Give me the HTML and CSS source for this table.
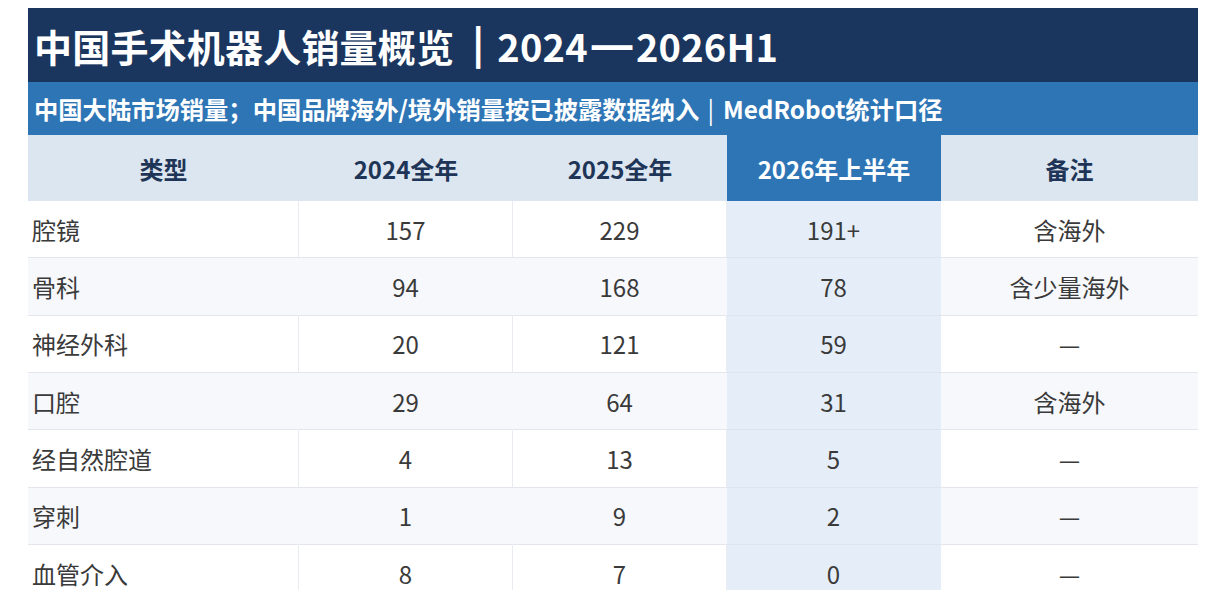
FILE: index.html
```html
<!DOCTYPE html>
<html lang="zh-CN">
<head>
<meta charset="utf-8">
<title>中国手术机器人销量概览</title>
<link rel="stylesheet" href="styles.css">
</head>
<body>
<div class="sheet">
  <div class="title">中国手术机器人销量概览<span class="bar">|</span>2024<span class="dash">—</span>2026H1</div>
  <div class="subtitle">中国大陆市场销量；中国品牌海外/境外销量按已披露数据纳入<span class="pipe">|</span>MedRobot统计口径</div>
  <div class="grid">
    <div class="th">类型</div>
    <div class="th">2024全年</div>
    <div class="th">2025全年</div>
    <div class="th hl">2026年上半年</div>
    <div class="th last">备注</div>

    <div class="td name">腔镜</div><div class="td">157</div><div class="td">229</div><div class="td hlc">191+</div><div class="td last">含海外</div>
    <div class="td name alt">骨科</div><div class="td alt">94</div><div class="td alt">168</div><div class="td hlc">78</div><div class="td alt last">含少量海外</div>
    <div class="td name">神经外科</div><div class="td">20</div><div class="td">121</div><div class="td hlc">59</div><div class="td last">—</div>
    <div class="td name alt">口腔</div><div class="td alt">29</div><div class="td alt">64</div><div class="td hlc">31</div><div class="td alt last">含海外</div>
    <div class="td name">经自然腔道</div><div class="td">4</div><div class="td">13</div><div class="td hlc">5</div><div class="td last">—</div>
    <div class="td name alt">穿刺</div><div class="td alt">1</div><div class="td alt">9</div><div class="td hlc">2</div><div class="td alt last">—</div>
    <div class="td name">血管介入</div><div class="td">8</div><div class="td">7</div><div class="td hlc">0</div><div class="td last">—</div>
  </div>
</div>
</body>
</html>
```

FILE: styles.css
```css
* { box-sizing: border-box; }
html, body { margin: 0; padding: 0; background: #ffffff; }
body {
  font-family: "Noto Sans CJK SC", "Noto Sans", sans-serif;
  overflow: hidden;
}
.sheet {
  margin: 8px 0 0 28px;
  width: 1170px;
}
.title {
  height: 74px;
  background: #1b365e;
  color: #ffffff;
  font-size: 38px;
  font-weight: 700;
  display: flex;
  align-items: center;
  padding-left: 6px;
  letter-spacing: 0.2px;
}
.title .bar {
  display: inline-block;
  font-family: "DejaVu Sans", sans-serif;
  font-weight: 700;
  margin: 0 12px 0 17px;
  transform: scaleY(1.1);
}
.title .dash {
  display: inline-block;
  font-family: "DejaVu Sans", sans-serif;
  font-weight: 700;
  margin: 0 5px;
  transform: scaleX(1.2);
}
.subtitle {
  height: 53px;
  background: #2e75b6;
  color: #ffffff;
  font-size: 24.3px;
  font-weight: 700;
  display: flex;
  align-items: center;
  padding-left: 6px;
}
.subtitle .pipe { margin: 0 9px 0 8px; font-weight: 400; }
.grid {
  display: grid;
  grid-template-columns: 271px 214px 214px 214px 257px;
  grid-template-rows: 66px repeat(7, 57.33px);
}
.th {
  background: #dce6f0;
  color: #1e3557;
  font-size: 24px;
  font-weight: 700;
  display: flex;
  align-items: center;
  justify-content: center;
}
.th.hl { background: #2e75b6; color: #ffffff; }
.td {
  background: #ffffff;
  color: #3a3a3a;
  font-size: 24px;
  display: flex;
  align-items: center;
  justify-content: center;
  border-right: 1px solid #e8ecf1;
  border-bottom: 1px solid #e3e7ed;
}
.td.alt { background: #f6f8fb; border-right-color: #f6f8fb; }
.td.name { justify-content: flex-start; padding-left: 4px; }
.td.hlc { background: #e5eef8; border-right-color: #e5eef8; border-bottom-color: #dbe4ef; }
.td.last { border-right: none; }
```
